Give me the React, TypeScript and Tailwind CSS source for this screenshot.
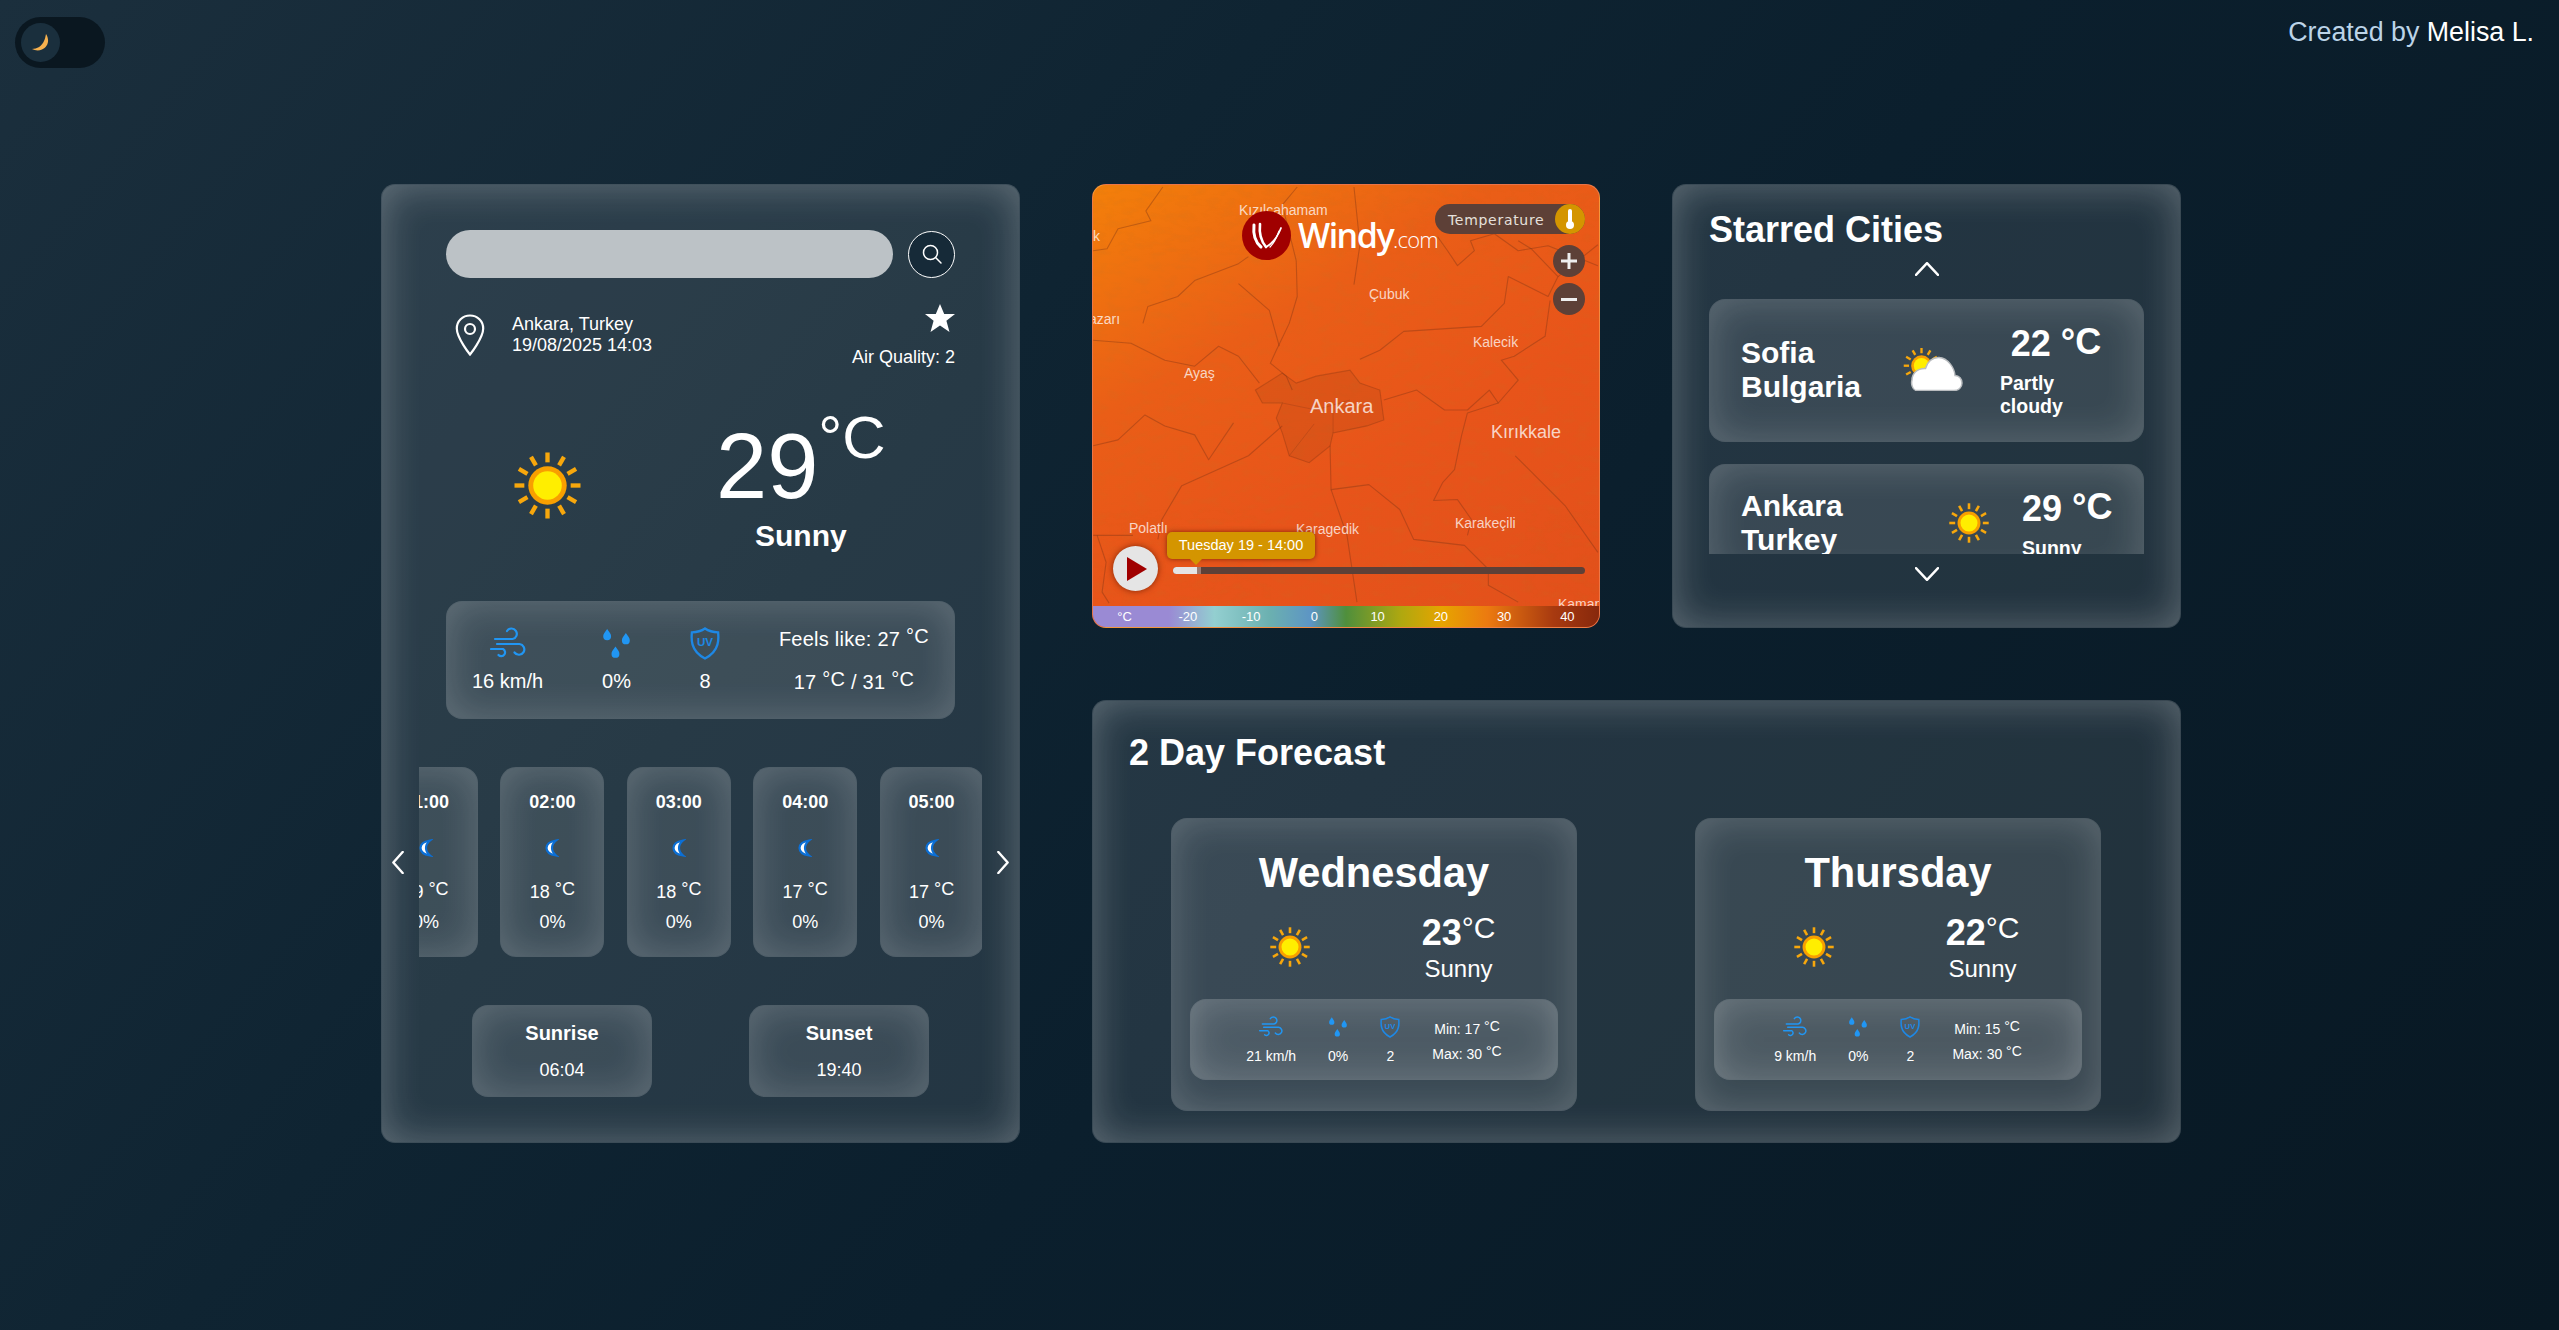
const glass = 'border border-white/10 bg-white/10 shadow-[inset_0_0_40px_rgba(255,255,255,0.28)]';
const tile = 'border border-white/10 bg-white/10 shadow-[inset_0_0_40px_rgba(255,255,255,0.2)]';

const rayAngles = [0, 30, 60, 90, 120, 150, 180, 210, 240, 270, 300, 330];

const hours = [
  { time: '01:00', temp: '19' },
  { time: '02:00', temp: '18' },
  { time: '03:00', temp: '18' },
  { time: '04:00', temp: '17' },
  { time: '05:00', temp: '17' },
];

const forecast = [
  { day: 'Wednesday', temp: '23', wind: '21 km/h', min: '17', max: '30' },
  { day: 'Thursday', temp: '22', wind: '9 km/h', min: '15', max: '30' },
];

const mapLabels = [
  { name: 'Kızılcahamam', pos: 'left-[146px] top-[16px] text-[14px]' },
  { name: 'k', pos: 'left-0 top-[42px] text-[14px]' },
  { name: 'Çubuk', pos: 'left-[276px] top-[100px] text-[14px]' },
  { name: 'azarı', pos: 'left-[-4px] top-[125px] text-[14px]' },
  { name: 'Kalecik', pos: 'left-[380px] top-[148px] text-[14px]' },
  { name: 'Ayaş', pos: 'left-[91px] top-[179px] text-[14px]' },
  { name: 'Ankara', pos: 'left-[217px] top-[212px] text-[20px]' },
  { name: 'Kırıkkale', pos: 'left-[398px] top-[238px] text-[18px]' },
  { name: 'Polatlı', pos: 'left-[36px] top-[334px] text-[14px]' },
  { name: 'Karagedik', pos: 'left-[203px] top-[335px] text-[14px]' },
  { name: 'Karakeçili', pos: 'left-[362px] top-[329px] text-[14px]' },
  { name: 'Kaman', pos: 'left-[465px] top-[410px] text-[14px]' },
];

const mapLines = [
  'M204 76 L205 112 L197 139 L184 166 L178 179 L194 192 L200 206',
  'M0 156 L38 159 L72 176 L102 182 L126 162 L146 172 L167 199',
  'M0 66 L14 64 L25 44 L58 36 L53 26 L70 2',
  'M50 139 L55 122 L85 112 L102 96 L146 79 L156 72',
  'M146 99 L177 126 L187 162',
  'M268 175 L288 166 L312 147 L390 142 L413 119 L417 92 L457 112 L467 92 L440 64 L427 56',
  'M346 52 L356 66 L366 81 L383 66 L379 56 L403 49 L427 66 L457 61 L507 81',
  'M238 262 L239 306 L277 301 L308 326 L322 356 L373 362 L397 386 L397 402 L427 419',
  'M190 242 L156 272 L89 302 L69 336 L65 356',
  'M0 262 L25 256 L52 231 L72 242 L102 251 L116 276 L141 239',
  'M292 216 L325 206 L353 226 L376 226 L398 206 L407 219 L427 196 L410 176 L423 172 L454 152 L459 116',
  'M407 219 L376 229 L370 252 L363 286 L351 299 L342 317 L366 316 L380 336 L376 352',
  'M424 272 L474 322 L507 369',
  'M239 306 L255 352 L265 419',
  'M0 352 L40 352',
  'M4 352 L13 379 L9 409 L16 420',
  'M205 2 L190 20 L204 76',
  'M262 2 L268 60 L262 100',
  'M467 92 L507 60',
];

function Unit() {
  return <span className="align-[3px]">°C</span>;
}

function SunIcon({ className }: { className: string }) {
  return (
    <svg viewBox="-34 -34 68 68" className={className}>
      {rayAngles.map((a) => (
        <rect key={a} x="-2.200" y="-33.500" width="4.400" height="10" fill="#f7a70c" transform={`rotate(${a})`} />
      ))}
      <circle r="19.500" fill="#f89f00" />
      <circle r="14.500" fill="#ffee00" />
    </svg>
  );
}

function MoonIcon() {
  return (
    <svg viewBox="0 0 14 18" className="h-[18px] w-[14px]">
      <path d="M11 1.500C5 2.500 1.500 5.500 1.500 9s3.500 6.500 9.500 7.500C8 14 7 11.500 7 9s1-5 4-7.500z" fill="#fff" stroke="#0b6fd6" strokeWidth="2.200" />
    </svg>
  );
}

function PartlyCloudyIcon() {
  return (
    <svg viewBox="0 0 61 43" className="h-[43px] w-[61px] flex-none">
      <g transform="translate(19.500 17.700) scale(0.53)">
        {rayAngles.map((a) => (
          <rect key={a} x="-2.200" y="-33.500" width="4.400" height="10" fill="#f7a70c" transform={`rotate(${a})`} />
        ))}
        <circle r="19.500" fill="#f89f00" />
        <circle r="14.500" fill="#ffee00" />
      </g>
      <path d="M15 42.500h37c4.500 0 8-3 8-7.500 0-4-2.800-7.500-7-7.500C52.500 20 46 10 37 9.500 30.500 9.200 25 14 23.500 20.500 15 20 10 26 10 32c-1 3 0 10.500 5 10.500z" fill="#fff" stroke="#b9bcbf" strokeWidth="1.500" />
    </svg>
  );
}

function WindIcon({ className }: { className: string }) {
  return (
    <svg viewBox="0 0 36 32" fill="none" stroke="#2196f3" strokeWidth="2.200" strokeLinecap="round" className={className}>
      <path d="M5 11.500h17.500a5.300 5.300 0 1 0-5.500-8" />
      <path d="M1 21.500h12a3.800 3.800 0 1 1-4.500 6" />
      <path d="M7 16.500h22.500a5.400 5.400 0 1 1-5 8.500" />
    </svg>
  );
}

function DropsIcon({ className }: { className: string }) {
  const drop = 'M0 0c-2.600 3.600-3.800 5.200-3.800 7a3.800 3.800 0 0 0 7.600 0c0-1.800-1.200-3.400-3.800-7z';
  return (
    <svg viewBox="0 0 26 30" fill="#2196f3" className={className}>
      <path d={drop} transform="translate(4 1)" />
      <path d={drop} transform="translate(22 5)" />
      <path d={drop} transform="translate(12 18)" />
    </svg>
  );
}

function UvIcon({ className }: { className: string }) {
  return (
    <svg viewBox="0 0 30 34" fill="none" className={className}>
      <path d="M15 1.500c3.800 2.600 8.200 3.800 13.500 4 .4 4 .4 9-.7 12.700C25.800 25.400 20.500 29.600 15 32.500 9.500 29.600 4.200 25.400 2.200 18.200 1.100 14.500 1.100 9.500 1.500 5.500c5.300-.2 9.700-1.400 13.500-4z" stroke="#1e88e5" strokeWidth="2.400" />
      <text x="15" y="20" textAnchor="middle" fontSize="12" fontWeight="700" fill="#1e88e5" fontFamily="Liberation Sans, sans-serif">UV</text>
    </svg>
  );
}

function Chevron({ d, className }: { d: string; className: string }) {
  return (
    <svg viewBox="0 0 24 24" preserveAspectRatio="none" fill="none" stroke="#fff" strokeWidth="2.400" strokeLinecap="round" strokeLinejoin="round" className={className}>
      <path d={d} vectorEffect="non-scaling-stroke" />
    </svg>
  );
}

function WeatherPanel() {
  return (
    <section className={`h-[959px] rounded-[14px] px-[64px] pt-[45px] ${glass}`}>
      {/* Search */}
      <div className="flex items-center justify-between">
        <div className="h-[48px] w-[447px] rounded-[24px] bg-[#bcc2c6]" />
        <button className="flex h-[47px] w-[47px] items-center justify-center rounded-full border border-white bg-[#162a38]">
          <svg viewBox="0 0 22 22" fill="none" stroke="#fff" strokeWidth="1.500" strokeLinecap="round" className="h-[22px] w-[22px]">
            <circle cx="9.500" cy="9.500" r="7" />
            <path d="M14.800 14.800L20 20" />
          </svg>
        </button>
      </div>

      {/* Location */}
      <div className="mt-[26px] flex items-start justify-between">
        <div className="mt-[10px] flex items-center pl-[9px] text-[18px] leading-[21px] text-white">
          <svg viewBox="0 0 30 42" fill="none" stroke="#fff" strokeWidth="2.200" className="h-[42px] w-[30px]">
            <path d="M15 1.500C7.500 1.500 1.800 7.200 1.800 14.500 1.800 24 15 40.500 15 40.500S28.200 24 28.200 14.500C28.200 7.200 22.500 1.500 15 1.500z" />
            <circle cx="15" cy="15" r="5" />
          </svg>
          <div className="ml-[27px]">
            <p>Ankara, Turkey</p>
            <p>19/08/2025 14:03</p>
          </div>
        </div>
        <div className="flex flex-col items-end text-[18px] leading-[21px] text-white">
          <svg viewBox="0 0 30 28" fill="#fff" className="h-[28px] w-[30px]">
            <path d="M15 0l4.200 10H30l-8.600 6.700L24.500 28 15 21.400 5.500 28l3.100-11.300L0 10h10.800z" />
          </svg>
          <p className="mt-[15px]">Air Quality: 2</p>
        </div>
      </div>

      {/* Current temperature */}
      <div className="mt-[40px] flex items-center text-white">
        <SunIcon className="ml-[68px] mt-[9px] h-[67px] w-[67px] flex-none" />
        <div className="ml-[135px] flex flex-col items-center">
          <div className="flex items-start pt-[12px]">
            <span className="text-[92px] leading-none">29</span>
            <span className="-mt-[12px] text-[60px] leading-none">°C</span>
          </div>
          <p className="mt-[7px] text-[30px] font-bold leading-[34px]">Sunny</p>
        </div>
      </div>

      {/* Details */}
      <div className={`mt-[48px] flex h-[118px] items-center justify-between rounded-2xl px-[25px] text-[20px] leading-[23px] text-white ${tile}`}>
        <div className="flex flex-col items-center gap-[10px]">
          <WindIcon className="h-[33px] w-[36px]" />
          <span>16 km/h</span>
        </div>
        <div className="flex flex-col items-center gap-[10px]">
          <DropsIcon className="h-[33px] w-[27px]" />
          <span>0%</span>
        </div>
        <div className="flex flex-col items-center gap-[10px]">
          <UvIcon className="h-[33px] w-[30px]" />
          <span>8</span>
        </div>
        <div className="mb-[2px] flex flex-col items-center gap-[17px] tracking-[0.25px]">
          <span>Feels like: 27 <Unit /></span>
          <span>17 <Unit /> / 31 <Unit /></span>
        </div>
      </div>

      {/* Hourly */}
      <div className="-mx-[55px] mt-[48px] flex items-center gap-[14px] text-white">
        <Chevron d="M20 1L4 12l16 11" className="h-[23px] w-[14px] flex-none" />
        <div className="min-w-0 flex-1 overflow-hidden">
          <div className="-ml-[45px] flex gap-[22.400px]">
            {hours.map((h) => (
              <div key={h.time} className={`flex h-[190px] w-[104px] flex-none flex-col items-center rounded-2xl pt-[24px] text-[18px] leading-[21px] ${tile}`}>
                <p className="font-bold">{h.time}</p>
                <div className="mt-[26px]"><MoonIcon /></div>
                <p className="mt-[22px]">{h.temp} <Unit /></p>
                <p className="mt-[9px]">0%</p>
              </div>
            ))}
          </div>
        </div>
        <Chevron d="M4 1l16 11L4 23" className="h-[23px] w-[14px] flex-none" />
      </div>

      {/* Sunrise and sunset */}
      <div className="mt-[48px] flex justify-center gap-[97px] text-white">
        <div className={`flex h-[92px] w-[180px] flex-col items-center rounded-2xl pt-[16px] ${tile}`}>
          <p className="text-[20px] font-bold leading-[23px]">Sunrise</p>
          <p className="mt-[15px] text-[18px] leading-[21px]">06:04</p>
        </div>
        <div className={`flex h-[92px] w-[180px] flex-col items-center rounded-2xl pt-[16px] ${tile}`}>
          <p className="text-[20px] font-bold leading-[23px]">Sunset</p>
          <p className="mt-[15px] text-[18px] leading-[21px]">19:40</p>
        </div>
      </div>
    </section>
  );
}

function WindyMap() {
  return (
    <section className="relative h-[444px] overflow-hidden rounded-[14px] border border-white/20 bg-[linear-gradient(150deg,#f3800a_0%,#ea5e17_32%,#e8541a_60%,#e2501b_100%)]">
      {/* Terrain and borders */}
      <svg viewBox="0 0 508 444" className="absolute inset-0 h-full w-full">
        <defs>
          <filter id="terrain">
            <feTurbulence type="fractalNoise" baseFrequency="0.07 0.14" numOctaves="4" seed="8" />
            <feColorMatrix values="0 0 0 0 0.5  0 0 0 0 0.18  0 0 0 0 0.02  0 0 0 1 -0.45" />
          </filter>
        </defs>
        <rect width="508" height="444" filter="url(#terrain)" opacity="0.3" />
        <path d="M163 206 L190 189 L204 199 L224 192 L258 186 L268 199 L288 206 L292 236 L275 242 L241 249 L238 262 L217 279 L197 272 L190 249 L184 234 L190 219 L170 219 Z" fill="#7a3214" fillOpacity="0.1" stroke="#7a3214" strokeOpacity="0.32" strokeWidth="1.100" />
        <path d="M190 219 L224 226 L258 216 M241 249 L241 222 M197 272 L222 240" fill="none" stroke="#7a3214" strokeOpacity="0.25" />
        {mapLines.map((d) => (
          <path key={d} d={d} fill="none" stroke="#7a3214" strokeOpacity="0.38" strokeWidth="1.100" strokeLinejoin="round" />
        ))}
      </svg>

      {/* City names */}
      {mapLabels.map((l) => (
        <span key={l.name} className={`absolute leading-[18px] text-white/75 ${l.pos}`}>{l.name}</span>
      ))}

      {/* Windy logo */}
      <svg viewBox="0 0 49 49" className="absolute left-[149px] top-[26px] h-[49px] w-[49px]">
        <circle cx="24.500" cy="24.500" r="24.500" fill="#a00000" />
        <g fill="none" stroke="#fff" strokeLinecap="round">
          <path d="M12 14c-1 9 1 17 7 22" strokeWidth="3" />
          <path d="M18 13c-1 9 1 17 6 23" strokeWidth="2.600" />
          <path d="M39 17c-3 8-8 15-15 19" strokeWidth="1.800" />
          <path d="M37 20c-2 6-5 12-9 16" strokeWidth="1.200" />
        </g>
      </svg>
      <p className="absolute left-[205px] top-[28px] font-['Open_Sans',sans-serif] text-[34px] font-semibold leading-[44px] tracking-[-1.500px] text-white">
        Windy<span className="text-[22px] font-light tracking-[-0.8px]">.com</span>
      </p>

      {/* Overlay picker */}
      <div className="absolute left-[342px] top-[19px] flex h-[30px] w-[150px] items-center justify-between rounded-full bg-[#5d4037] pl-[13px]">
        <span className="mt-[2px] font-['DejaVu_Sans',sans-serif] text-[14px] tracking-[0.7px] text-[#e6e0dc]">Temperature</span>
        <span className="flex h-[30px] w-[30px] items-center justify-center rounded-full bg-[#d49500]">
          <svg viewBox="0 0 10 22" className="h-[22px] w-[10px]" fill="#fff">
            <rect x="3" y="1" width="4" height="14" rx="2" />
            <circle cx="5" cy="17" r="4" />
          </svg>
        </span>
      </div>

      {/* Zoom */}
      <div className="absolute left-[460px] top-[60px] flex flex-col gap-[6px]">
        <span className="flex h-[32px] w-[32px] items-center justify-center rounded-full bg-[#5d4037]">
          <svg viewBox="0 0 16 16" className="h-[16px] w-[16px]" fill="#eee"><path d="M6.500 0h3v6.500H16v3H9.500V16h-3V9.500H0v-3h6.500z" /></svg>
        </span>
        <span className="flex h-[32px] w-[32px] items-center justify-center rounded-full bg-[#5d4037]">
          <svg viewBox="0 0 16 3" className="h-[3px] w-[16px]" fill="#eee"><rect width="16" height="3" /></svg>
        </span>
      </div>

      {/* Timeline */}
      <span className="absolute left-[20px] top-[361px] flex h-[45px] w-[45px] items-center justify-center rounded-full bg-[#e5e5e5] shadow-[0_0_6px_rgba(90,20,0,0.7)]">
        <svg viewBox="0 0 20 24" className="ml-[3px] h-[24px] w-[20px]" fill="#a00000"><path d="M0 0l20 12L0 24z" /></svg>
      </span>
      <div className="absolute left-[74px] top-[347px] flex h-[27px] w-[148px] items-center justify-center rounded-[5px] bg-[#d49500] text-[14.500px] text-white shadow-[0_0_5px_rgba(90,20,0,0.7)]">
        Tuesday 19 - 14:00
      </div>
      <span className="absolute left-[97px] top-[374px] h-0 w-0 border-x-[6px] border-t-[6px] border-x-transparent border-t-[#d49500]" />
      <div className="absolute left-[80px] top-[382px] flex h-[7px] w-[412px] overflow-hidden rounded-full bg-[#5d4037]">
        <span className="h-full w-[24px] bg-[#e5e5e5]" />
        <span className="h-full w-[4px] bg-[#9a7a70]" />
      </div>

      {/* Legend */}
      <div className="absolute inset-x-0 bottom-0 flex h-[21px] items-center bg-[linear-gradient(90deg,#9a8ad4_0%,#9a8ad4_15%,#93cfd0_24%,#6bb0b0_35%,#5d95c4_43%,#4f8f3c_50%,#b0a80f_61%,#e6a400_69%,#ec7a10_78%,#a83a10_91%,#87280c_100%)] text-[13px] text-white">
        {['°C', '-20', '-10', '0', '10', '20', '30', '40'].map((t) => (
          <span key={t} className="flex-1 text-center">{t}</span>
        ))}
      </div>
    </section>
  );
}

function StarredCities() {
  return (
    <section className={`h-[444px] rounded-[14px] px-[36px] pt-[24px] text-white ${glass}`}>
      <h2 className="text-[36px] font-bold leading-[41px]">Starred Cities</h2>
      <Chevron d="M1 22L12 2l11 20" className="mx-auto mt-[12px] h-[14px] w-[24px]" />
      <div className="mt-[23px] flex h-[255px] flex-col gap-[22px] overflow-hidden">
        <div className={`flex flex-none items-center rounded-2xl px-[31px] pb-[23px] pt-[21px] ${tile}`}>
          <div className="w-[118px] flex-none text-[30px] font-bold leading-[34px]">
            <p>Sofia</p>
            <p>Bulgaria</p>
          </div>
          <div className="ml-[43px]"><PartlyCloudyIcon /></div>
          <div className="ml-[37px] w-[112px] flex-none font-bold">
            <p className="text-center text-[36px] leading-[41px]">22 <span className="align-[2px]">°C</span></p>
            <p className="mt-[8px] text-[19.500px] leading-[23px]">Partly cloudy</p>
          </div>
        </div>
        <div className={`flex flex-none items-center rounded-2xl px-[31px] pb-[23px] pt-[21px] ${tile}`}>
          <div className="w-[118px] flex-none text-[30px] font-bold leading-[34px]">
            <p>Ankara</p>
            <p>Turkey</p>
          </div>
          <SunIcon className="ml-[90px] h-[40px] w-[40px] flex-none" />
          <div className="ml-[33px] flex-none font-bold">
            <p className="text-[36px] leading-[41px]">29 <span className="align-[2px]">°C</span></p>
            <p className="mt-[8px] text-[19.500px] leading-[23px]">Sunny</p>
          </div>
        </div>
      </div>
      <Chevron d="M1 2l11 20L23 2" className="mx-auto mt-[13px] h-[14px] w-[24px]" />
    </section>
  );
}

function Forecast() {
  return (
    <section className={`col-span-3 h-[443px] rounded-[14px] pt-[31px] text-white ${glass}`}>
      <h2 className="pl-[36px] text-[36px] font-bold leading-[41px]">2 Day Forecast</h2>
      <div className="mt-[45px] flex justify-between pl-[78px] pr-[79px]">
        {forecast.map((f) => (
          <div key={f.day} className={`h-[293px] w-[406px] rounded-2xl px-[18px] pt-[30px] ${tile}`}>
            <h3 className="text-center text-[41.600px] font-bold leading-[48px]">{f.day}</h3>
            <div className="mx-auto mt-[14px] grid h-[71px] w-[338px] grid-cols-2 items-center">
              <SunIcon className="mx-auto h-[40px] w-[40px]" />
              <div className="flex flex-col items-center">
                <div className="flex items-start">
                  <span className="text-[36px] font-bold leading-[41px]">{f.temp}</span>
                  <span className="-mt-[2px] text-[30px] leading-[35px]">°C</span>
                </div>
                <p className="mt-[2px] text-[24px] leading-[27px]">Sunny</p>
              </div>
            </div>
            <div className={`mt-[17px] flex h-[81px] items-center justify-center gap-8 rounded-2xl text-[14px] leading-[16px] ${tile}`}>
              <div className="flex flex-col items-center gap-[10px]">
                <WindIcon className="h-[22px] w-[24px]" />
                <span>{f.wind}</span>
              </div>
              <div className="flex flex-col items-center gap-[10px]">
                <DropsIcon className="h-[22px] w-[18px]" />
                <span>0%</span>
              </div>
              <div className="flex flex-col items-center gap-[10px]">
                <UvIcon className="h-[22px] w-[20px]" />
                <span>2</span>
              </div>
              <div className="flex flex-col items-center gap-[6px]">
                <span>Min: {f.min} <Unit /></span>
                <span>Max: {f.max} <Unit /></span>
              </div>
            </div>
          </div>
        ))}
      </div>
    </section>
  );
}

export default function App() {
  return (
    <div className="min-h-screen w-full bg-[linear-gradient(130deg,#1b2f3d_0%,#0f2432_35%,#0b1f2d_55%,#081823_100%)] font-['Liberation_Sans',Arial,sans-serif]">
      <header className="flex h-[184px] items-start justify-between pl-[15px] pr-[25px] pt-[17px]">
        <div className="flex h-[51px] w-[90px] items-center rounded-full bg-[#0a1720] pl-[6px]">
          <span className="flex h-[39px] w-[39px] items-center justify-center rounded-full bg-[#1a2f3d]">
            <svg viewBox="0 0 17 17" className="h-[17px] w-[17px]" fill="#f6b14e">
              <path d="M14 0C18 6 16 13 10 15.500 6.500 17 3 16.500 0 15 5 15 10 12 12 7 13 5 13.500 2.500 14 0z" />
            </svg>
          </span>
        </div>
        <p className="text-[26.800px] leading-[31px] text-[#bcd4e8]">
          Created by <span className="text-white">Melisa L.</span>
        </p>
      </header>

      <main className="flex justify-center pl-[3px]">
        <div className="grid w-[1800px] grid-cols-[639px_72px_1089px]">
          <WeatherPanel />
          <div />
          <div className="grid grid-cols-[508px_72px_509px] content-start gap-y-[72px]">
            <WindyMap />
            <div />
            <StarredCities />
            <Forecast />
          </div>
        </div>
      </main>
    </div>
  );
}
